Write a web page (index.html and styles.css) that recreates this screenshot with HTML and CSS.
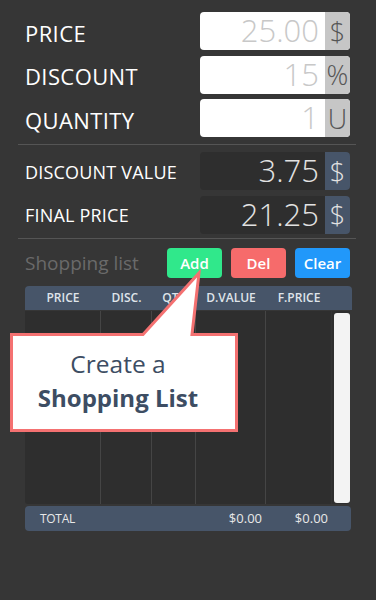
FILE: index.html
```html
<!DOCTYPE html>
<html lang="en">
<head>
  <meta charset="UTF-8">
  <title>Discount Calculator</title>
  <link rel="stylesheet" href="styles.css">
</head>

<body>
  <div class="app">
    <div class="fields">
      <div class="field">
        <span class="label">PRICE</span>
        <div class="input"><span class="value">25.00</span><span class="unit">$</span></div>
      </div>
      <div class="field">
        <span class="label">DISCOUNT</span>
        <div class="input"><span class="value">15</span><span class="unit">%</span></div>
      </div>
      <div class="field">
        <span class="label">QUANTITY</span>
        <div class="input"><span class="value">1</span><span class="unit">U</span></div>
      </div>
    </div>
    <hr class="divider">
    <div class="fields results">
      <div class="field">
        <span class="label">DISCOUNT VALUE</span>
        <div class="input"><span class="value">3.75</span><span class="unit">$</span></div>
      </div>
      <div class="field">
        <span class="label">FINAL PRICE</span>
        <div class="input"><span class="value">21.25</span><span class="unit">$</span></div>
      </div>
    </div>
    <hr class="divider divider-bottom">
    <div class="list-bar">
      <span class="list-title">Shopping list</span>
      <button class="btn btn-add">Add</button>
      <button class="btn btn-del">Del</button>
      <button class="btn btn-clear">Clear</button>
    </div>
    <div class="table">
      <div class="thead">
        <span>PRICE</span><span>DISC.</span><span>QTY</span><span>D.VALUE</span><span>F.PRICE</span>
      </div>
      <div class="tbody">
        <div class="col"></div>
        <div class="col"></div>
        <div class="col"></div>
        <div class="col"></div>
        <div class="col"></div>
        <div class="scroll"><div class="thumb"></div></div>
      </div>
      <div class="tfoot">
        <span class="total-label">TOTAL</span><span></span><span></span>
        <span class="total-num">$0.00</span><span class="total-num">$0.00</span>
      </div>
    </div>
  </div>

  <div class="callout">
    <svg class="callout-shape" width="232" height="166" viewBox="0 0 232 166">
      <path d="M3.5 66.5 L135 66.5 L191 5 L184 66.5 L228.5 66.5 L228.5 162.5 L3.5 162.5 Z" fill="#fff" stroke="#f47171" stroke-width="3" stroke-linejoin="miter"/>
    </svg>
    <div class="callout-text">Create a<br><b>Shopping List</b></div>
  </div>
</body>
</html>
```

FILE: styles.css
```css
html, body {
  margin: 0;
  background: #363636;
  font-family: 'Open Sans', 'Liberation Sans', sans-serif;
}
*,
*::before,
*::after {
  box-sizing: border-box;
}
.app {
  padding: 12px 26px 0 25px;
}
.fields {
  display: flex;
  flex-direction: column;
  gap: 5.5px;
}
.field {
  display: flex;
  align-items: center;
  height: 38px;
}
.field .label {
  flex: 1;
  padding-top: 3px;
  font-size: 22px;
  letter-spacing: 0.4px;
  color: #fff;
}
.results .field .label {
  padding-top: 1px;
  font-size: 18px;
  letter-spacing: 0.2px;
}
.input {
  display: flex;
  align-items: center;
  width: 150px;
  height: 38px;
  border-radius: 4px;
  background: #fff;
}
.input .value {
  flex: 1;
  padding-right: 6px;
  text-align: right;
  font-size: 31px;
  font-weight: 300;
  line-height: 1.2;
  color: #c8c8c8;
}
.input .unit {
  display: flex;
  align-items: center;
  justify-content: center;
  align-self: stretch;
  width: 25px;
  border-radius: 0 4px 4px 0;
  font-size: 27px;
  font-weight: 300;
  color: #555;
  background: #c6c6c6;
}
.results .input {
  background: #2e2e2e;
}
.results .input .value {
  color: #e2e2e2;
}
.results .input .unit {
  color: #e2e2e2;
  background: #475569;
}
/* 分割线 */
.divider {
  height: 0;
  margin: 7px -6px 7px -7px;
  border: 0;
  border-top: 1px solid #555;
}
.divider-bottom {
  margin-top: 4px;
  margin-bottom: 9px;
}
.list-bar {
  display: flex;
  align-items: center;
  gap: 9px;
  height: 30px;
}
.list-title {
  flex: 1;
  font-size: 19px;
  color: #6a6a6a;
}
.btn {
  width: 55px;
  height: 30px;
  padding: 0;
  border: 0;
  border-radius: 4px;
  font-family: inherit;
  font-size: 15px;
  font-weight: 600;
  color: #fff;
}
.btn-add {
  background: #30e88b;
}
.btn-del {
  background: #f66b6b;
}
.btn-clear {
  background: #2198fa;
}
.table {
  margin-top: 8px;
}
.thead,
.tbody,
.tfoot {
  display: grid;
  grid-template-columns: 76px 51px 44px 70px 66px 1fr;
}
.thead {
  height: 24px;
  margin-right: -2px;
  border-radius: 4px 4px 0 0;
  background: #475569;
}
.thead span {
  text-align: center;
  font-size: 12px;
  font-weight: 600;
  line-height: 24px;
  color: #dfe4ea;
}
.tbody {
  height: 193px;
  margin-top: 1px;
  border-radius: 0 0 3px 3px;
  background: #2e2e2e;
}
.tbody .col {
  border-right: 1px solid #454545;
}
.tbody .col:nth-child(5) {
  border-right-color: #333;
}
.scroll {
  padding: 2px 0 1px 2px;
}
.thumb {
  height: 100%;
  border-radius: 3px;
  background: #f3f3f3;
}
.tfoot {
  height: 25px;
  margin-top: 2px;
  margin-right: -1px;
  border-radius: 4px;
  background: #475569;
}
.tfoot span {
  font-size: 13px;
  line-height: 25px;
  color: #e8e8e8;
}
.tfoot .total-label {
  padding-left: 15px;
  font-size: 12px;
  letter-spacing: -0.3px;
}
.tfoot .total-num {
  padding-right: 4px;
  text-align: right;
}
/* 提示气泡 */
.callout-shape {
  position: absolute;
  left: 8px;
  top: 268px;
}
.callout-text {
  position: absolute;
  left: 10px;
  top: 347px;
  width: 216px;
  text-align: center;
  font-size: 24.5px;
  line-height: 34px;
  color: #3d4d63;
}
.callout-text b {
  font-size: 24px;
  font-weight: 700;
}
```
